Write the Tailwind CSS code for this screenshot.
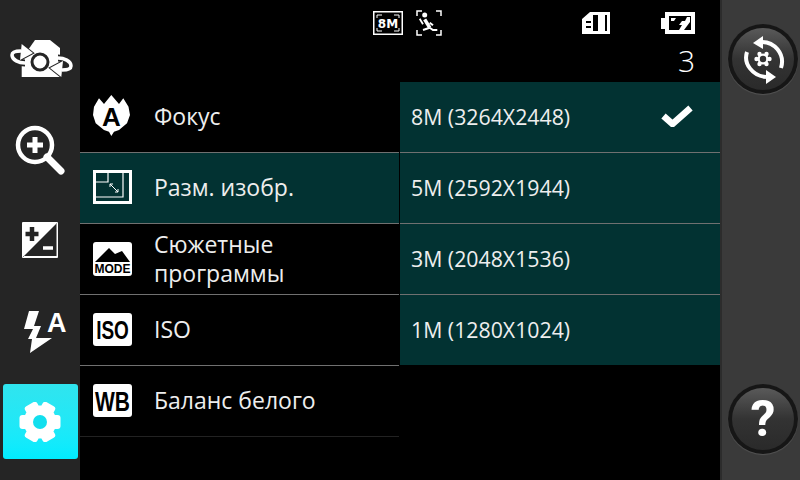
<!DOCTYPE html>
<html lang="ru">
  <head>
    <meta charset="UTF-8" />
    <meta name="viewport" content="width=device-width, initial-scale=1.0" />
    <title>Camera settings</title>
    <script src="https://cdn.jsdelivr.net/npm/@tailwindcss/browser@4"></script>
  </head>
  <body class="bg-black text-white font-['Open_Sans',sans-serif]">
    <div class="flex w-[800px] h-[480px] overflow-hidden">
      <!-- Left toolbar -->
      <aside class="w-[80px] h-full bg-[#252525] flex flex-col items-center pt-[15px]">
        <div class="h-[90px] w-full flex items-center justify-center">
          <svg width="66" height="44" viewBox="-2 -1 66 44" fill="none">
            <path d="M12.700 38V20L26 1H41L51 9V38z" fill="#fff"/>
            <path d="M16 24C10 24 3 21 3 16 3 13 7 12 12 12" stroke="#252525" stroke-width="7"/>
            <path d="M12.700 5 24 14 11 21z" fill="#252525" stroke="#252525" stroke-width="2"/>
            <path d="M16 24C10 24 3 21 3 16 3 13 7 12 12 12" stroke="#fff" stroke-width="3.500"/>
            <path d="M12.700 5 24 14 11 21z" fill="#fff"/>
            <g transform="rotate(180 32.500 21.500)">
              <path d="M16 24C10 24 3 21 3 16 3 13 7 12 12 12" stroke="#252525" stroke-width="7"/>
              <path d="M12.700 5 24 14 11 21z" fill="#252525" stroke="#252525" stroke-width="2"/>
              <path d="M16 24C10 24 3 21 3 16 3 13 7 12 12 12" stroke="#fff" stroke-width="3.500"/>
              <path d="M12.700 5 24 14 11 21z" fill="#fff"/>
            </g>
            <circle cx="31" cy="23" r="8" fill="#fff" stroke="#252525" stroke-width="3"/>
          </svg>
        </div>
        <div class="h-[90px] w-full flex items-center justify-center">
          <svg width="50" height="50" viewBox="0 0 50 50" fill="none" stroke="#fff">
            <circle cx="20" cy="20" r="17" stroke-width="4.5"/>
            <path d="M32 32l14 14" stroke-width="7" stroke-linecap="round"/>
            <path d="M20 12v16M12 20h16" stroke-width="5"/>
          </svg>
        </div>
        <div class="h-[90px] w-full flex items-center justify-center">
          <svg width="36" height="36" viewBox="0 0 36 36">
            <rect width="36" height="36" rx="1" fill="#fff"/>
            <path d="M35 1v34H1z" fill="#252525"/>
            <path d="M35 1.5V34.500H2" fill="none" stroke="#fff" stroke-width="1"/>
            <path d="M10 5v14M3.500 12h13" stroke="#252525" stroke-width="4.500"/>
            <path d="M21 26h10" stroke="#fff" stroke-width="3.500"/>
          </svg>
        </div>
        <div class="h-[90px] w-full flex items-center justify-center">
          <svg class="ml-[12px]" width="44" height="46" viewBox="0 -4 44 46">
            <path d="M5 0H15L10 15H17L12 27H28L6 42 8 28H4L9 18H0z" fill="#fff"/>
            <text x="23" y="21" font-size="27" font-weight="700" fill="#fff" font-family="Liberation Sans">A</text>
          </svg>
        </div>
        <div class="w-[75px] h-[75px] rounded-[3px] bg-gradient-to-b from-[#30e4ee] to-[#00ecff] flex items-center justify-center mt-[9px]">
          <svg width="42" height="40" viewBox="-21 -20 42 40">
            <g fill="#fff">
              <circle r="16.500"/>
              <rect x="-7" y="-20.500" width="14" height="8" rx="3" transform="rotate(30)"/>
              <rect x="-7" y="-20.500" width="14" height="8" rx="3" transform="rotate(90)"/>
              <rect x="-7" y="-20.500" width="14" height="8" rx="3" transform="rotate(150)"/>
              <rect x="-7" y="-20.500" width="14" height="8" rx="3" transform="rotate(210)"/>
              <rect x="-7" y="-20.500" width="14" height="8" rx="3" transform="rotate(270)"/>
              <rect x="-7" y="-20.500" width="14" height="8" rx="3" transform="rotate(330)"/>
            </g>
            <circle r="7" fill="#12dfee"/>
          </svg>
        </div>
      </aside>

      <!-- Main panel -->
      <main class="w-[640px] h-[476px] my-[2px] bg-black flex flex-col">
        <!-- Status icons -->
        <div class="h-[80px] shrink-0">
          <div class="h-[44px] pt-[8px] flex items-start">
            <svg class="ml-[293px] mt-[1px]" width="30" height="24" viewBox="0 0 30 24" fill="none" stroke="#fff">
              <rect x=".75" y=".75" width="28.500" height="22.500" stroke-width="1.500"/>
              <path d="M4 7V4h5M21 4h5v3M4 17v3h5M21 20h5v-3" stroke-width="1"/>
              <text x="15" y="16.500" text-anchor="middle" font-size="12" font-weight="700" stroke="none" fill="#fff" font-family="DejaVu Sans">8M</text>
            </svg>
            <svg class="ml-[13px]" width="26" height="26" viewBox="0 0 26 26" fill="none" stroke="#fff">
              <path d="M1 6V1h5M20 1h5v5M1 20v5h5M20 25h5v-5" stroke-width="1.500"/>
              <circle cx="8.700" cy="5" r="2.500" fill="#fff" stroke="none"/>
              <path d="M3.700 8.700 7 14.300" stroke-width="1.800"/>
              <path d="M8.700 9.300 13.700 17.700" stroke-width="3.500"/>
              <path d="M13.700 17.700 7 20M13.700 17.700 17 20H21.300M13.700 12.700 17 15.300" stroke-width="2"/>
            </svg>
            <svg class="ml-[140px] mt-[2px]" width="28" height="22" viewBox="0 0 28 22">
              <path fill="#fff" fill-rule="evenodd" d="M8 0h20v22H0V7zM11 3v16h14V3zM4 9v2h5V9zM4 14v2h5v-2z"/>
              <rect x="16" y="3" width="7" height="16" fill="#fff"/>
            </svg>
            <svg class="ml-[51px] mt-[2px]" width="34" height="22" viewBox="0 0 34 22">
              <path fill="#fff" fill-rule="evenodd" d="M4 0h30v22H4v-5H0V6h4zM8 4v14h22V4z"/>
              <path fill="#fff" d="M10 6h5l-2 3h-3zM29 5v5l-6 8h-5l3-5h-3l3-4h3l2-4z"/>
            </svg>
          </div>
          <div class="text-right pr-[25px] text-[30px] leading-[30px] font-light">3</div>
        </div>

        <!-- Menu columns -->
        <div class="flex text-[23px] leading-[29px] text-[#eeeeee]">
          <ul class="w-[320px] border-r border-black">
            <li class="h-[71px] flex items-center border-b border-[#707070] pb-[2px] pl-[13px] gap-[22px]">
              <svg class="w-[39px] shrink-0 -ml-[1px] mr-[1px]" width="39" height="42" viewBox="0 0 39 42">
                <path fill="#fff" d="M19.300 0 27 9 31.300 3.300 36.500 11.700 38 20 35 28.300 27 35 22 36.700 19.300 41 17 36.700 12 35 3.700 28.300 1 20 2 11.700 7 3.300 12 9z"/>
                <text x="19.300" y="31" text-anchor="middle" font-size="26" font-weight="700" fill="#000" font-family="Liberation Sans">A</text>
              </svg>
              <span>Фокус</span>
            </li>
            <li class="h-[71px] flex items-center border-b border-[#707070] bg-[#023232] pb-[2px] pl-[13px] gap-[22px]">
              <svg class="w-[39px] shrink-0" width="39" height="34" viewBox="0 0 39 34" fill="none" stroke="#fff">
                <rect x="1.500" y="1.500" width="36" height="31" stroke-width="3"/>
                <path d="M3 12h12V3M3 27h27V3" stroke-width="1.200"/>
                <path d="M17 14l8 8M17 14h3M17 14v3M25 22h-3M25 22v-3" stroke-width="1"/>
              </svg>
              <span>Разм. изобр.</span>
            </li>
            <li class="h-[71px] flex items-center border-b border-[#707070] pl-[13px] gap-[22px]">
              <svg class="w-[39px] shrink-0" width="39" height="34" viewBox="0 0 39 34">
                <rect width="39" height="34" rx="3" fill="#fff"/>
                <path d="M2 20 16 6 22 12 29 9 37 20z" fill="#000"/>
                <text x="19.500" y="31" text-anchor="middle" font-size="12" font-weight="700" fill="#000" font-family="Liberation Sans">MODE</text>
              </svg>
              <span>Сюжетные<br />программы</span>
            </li>
            <li class="h-[71px] flex items-center border-b border-[#707070] pb-[2px] pl-[13px] gap-[22px]">
              <svg class="w-[39px] shrink-0" width="39" height="33" viewBox="0 0 39 33">
                <rect width="39" height="33" rx="3" fill="#fff"/>
                <text transform="translate(19.500 26) scale(1 1.350)" text-anchor="middle" font-size="19" font-weight="700" fill="#000" font-family="Liberation Sans">ISO</text>
              </svg>
              <span>ISO</span>
            </li>
            <li class="h-[71px] flex items-center border-b border-[#222] pb-[2px] pl-[13px] gap-[22px]">
              <svg class="w-[39px] shrink-0" width="39" height="33" viewBox="0 0 39 33">
                <rect width="39" height="33" rx="3" fill="#fff"/>
                <text transform="translate(19.500 26.500) scale(1 1.300)" text-anchor="middle" font-size="21" font-weight="700" fill="#000" font-family="Liberation Sans">WB</text>
              </svg>
              <span>Баланс белого</span>
            </li>
          </ul>
          <ul class="w-[320px] text-[21.300px]">
            <li class="h-[71px] flex items-center justify-between border-b border-[#707070] bg-[#023232] pb-[2px] pl-[11px] pr-[27px]">
              <span>8M (3264X2448)</span>
              <svg width="32" height="22" viewBox="0 0 32 22" fill="none">
                <path d="M2.500 11l9 8L29.500 3" stroke="#fff" stroke-width="6.500"/>
              </svg>
            </li>
            <li class="h-[71px] flex items-center border-b border-[#707070] bg-[#023232] pb-[2px] pl-[11px]">5M (2592X1944)</li>
            <li class="h-[71px] flex items-center border-b border-[#707070] bg-[#023232] pb-[2px] pl-[11px]">3M (2048X1536)</li>
            <li class="h-[70px] flex items-center bg-[#023232] pb-[2px] pl-[11px]">1M (1280X1024)</li>
          </ul>
        </div>
      </main>

      <!-- Right toolbar -->
      <aside class="w-[80px] h-full bg-[#3a3a3a] border-l-2 border-[#2c2c2c] flex flex-col justify-between items-center pt-[24px] pb-[26px] pl-[4px]">
        <button class="w-[70px] h-[70px] rounded-full bg-[#161616] p-[4px] shadow-[0_1px_1px_#555]">
          <span class="w-full h-full rounded-full bg-gradient-to-b from-[#5a5a5a] via-[#333] to-[#2a2a2a] flex items-center justify-center">
            <svg width="44" height="50" viewBox="-22 -25 44 50" fill="none">
              <path d="M-3-17A20 20 0 0 1 18 9" stroke="#fff" stroke-width="4"/>
              <path d="M-10-16 0-23V-10z" fill="#fff"/>
              <path d="M-16-7C-20 5-10 17 3 18" stroke="#fff" stroke-width="4"/>
              <path d="M13 18 3 11V25z" fill="#fff"/>
              <g fill="#fff">
                <circle r="5.500"/>
                <circle cx="-3.500" cy="-5" r="2.200"/>
                <circle cx="3.500" cy="-5" r="2.200"/>
                <circle cx="-6.500" cy="0" r="2.200"/>
                <circle cx="6.500" cy="0" r="2.200"/>
                <circle cx="-3.500" cy="5" r="2.200"/>
                <circle cx="3.500" cy="5" r="2.200"/>
              </g>
              <circle r="3.200" fill="#333"/>
            </svg>
          </span>
        </button>
        <button class="w-[70px] h-[70px] rounded-full bg-[#161616] p-[4px] shadow-[0_1px_1px_#555]">
          <span class="w-full h-full rounded-full bg-gradient-to-b from-[#5a5a5a] via-[#333] to-[#2a2a2a] flex items-center justify-center text-white text-[50px] font-bold font-['Roboto',sans-serif] leading-none">?</span>
        </button>
      </aside>
    </div>
  </body>
</html>
